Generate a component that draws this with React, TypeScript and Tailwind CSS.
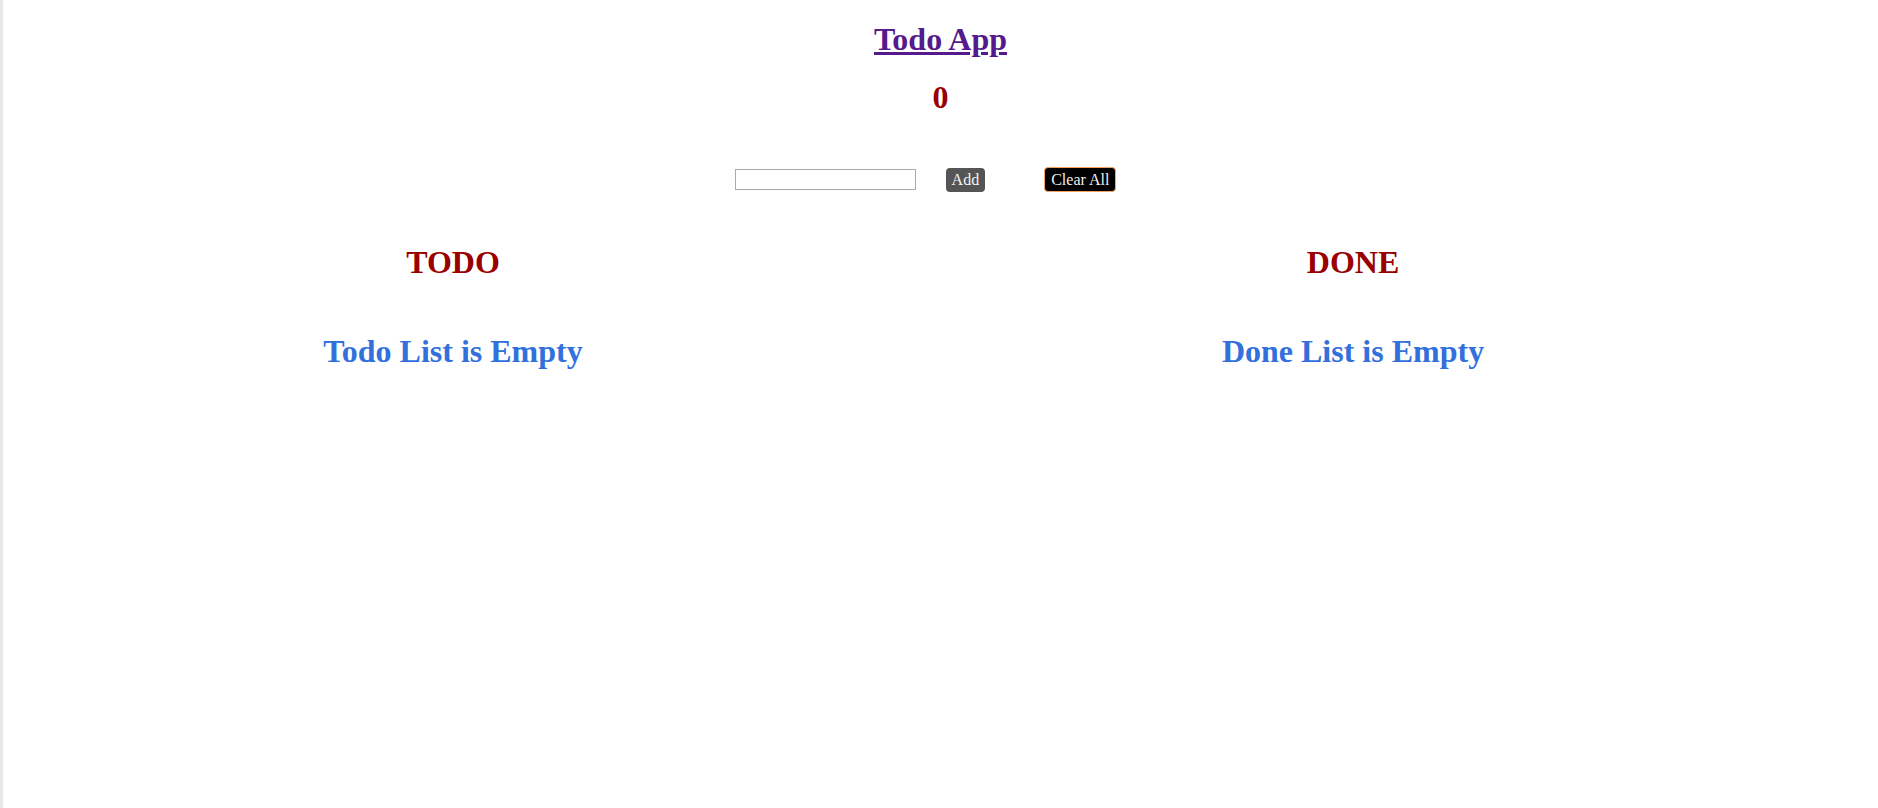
import { useState } from 'react';

export default function App() {
  const [todos, setTodos] = useState<string[]>([]);
  const [done, setDone] = useState<string[]>([]);
  const [text, setText] = useState('');

  const handleAdd = () => {
    if (!text.trim()) return;
    setTodos((prev) => [...prev, text.trim()]);
    setText('');
  };

  const handleClear = () => {
    setTodos([]);
    setDone([]);
  };

  return (
    <div className="min-h-[808px] bg-white border-l-[3px] border-[#e8e8e8] font-['Liberation_Serif','Times_New_Roman',serif] text-black">
      {/* Header */}
      <h1 className="pt-[21px] text-center text-[32px] leading-[37px] font-bold">
        <a href="#" className="text-[#551a8b] underline">
          Todo App
        </a>
      </h1>
      <h1 className="mt-[21px] text-center text-[32px] leading-[37px] font-bold text-[#990000]">
        {todos.length}
      </h1>

      {/* Input row */}
      <div className="mt-[51px] flex items-center justify-center">
        <input
          value={text}
          onChange={(e) => setText(e.target.value)}
          className="w-[181px] h-[21px] border border-[#a9a9a9] bg-white px-[2px] text-[13px] outline-none"
        />
        <button
          onClick={handleAdd}
          className="ml-[30px] h-[24px] px-[6px] rounded-[4px] bg-[#555555] text-[16px] leading-[18px] text-[#f4f4f4]"
        >
          Add
        </button>
        <button
          onClick={handleClear}
          className="ml-[59px] mr-[30px] h-[25px] px-[6px] rounded-[4px] border border-[#f4a460] bg-black text-[16px] leading-[18px] text-[#eeeeee]"
        >
          Clear All
        </button>
      </div>

      {/* Columns */}
      <div className="mt-[52px] flex">
        <div className="w-[48%] text-center">
          <h2 className="text-[32px] leading-[37px] font-bold text-[#990000]">TODO</h2>
          <h2 className="mt-[52px] text-[32px] leading-[37px] font-bold text-[#3271dc]">
            {todos.length === 0 ? 'Todo List is Empty' : todos.join(', ')}
          </h2>
        </div>
        <div className="w-[48%] text-center">
          <h2 className="text-[32px] leading-[37px] font-bold text-[#990000]">DONE</h2>
          <h2 className="mt-[52px] text-[32px] leading-[37px] font-bold text-[#3271dc]">
            {done.length === 0 ? 'Done List is Empty' : done.join(', ')}
          </h2>
        </div>
      </div>
    </div>
  );
}
